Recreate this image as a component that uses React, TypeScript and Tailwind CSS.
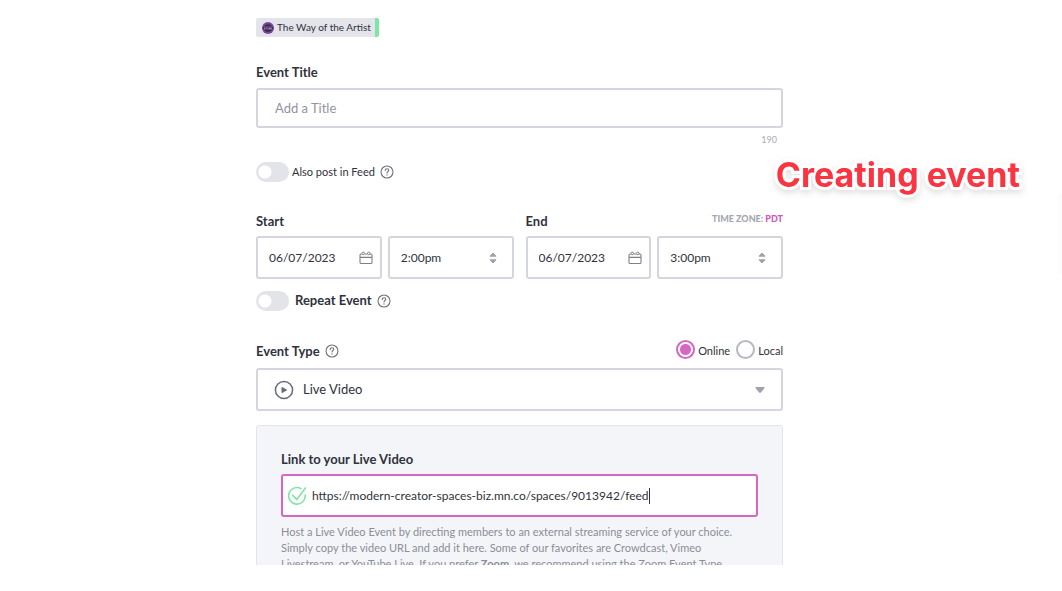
import { useState } from "react";
import type { ReactNode } from "react";

// ─── Icons ────────────────────────────────────────────────

function HelpIcon() {
  return (
    <svg viewBox="0 0 14 14" className="w-3.5 h-3.5" fill="none" stroke="#6f727d" aria-hidden="true">
      <circle cx="7" cy="7" r="6" strokeWidth="1.1" />
      <path d="M5.2 5.5c0-1.1.8-1.8 1.8-1.8s1.8.7 1.8 1.6c0 1.2-1.8 1.3-1.8 2.7" strokeWidth="1.1" strokeLinecap="round" />
      <circle cx="7" cy="10" r=".65" fill="#6f727d" stroke="none" />
    </svg>
  );
}

function CalendarIcon() {
  return (
    <svg viewBox="0 0 14 14" className="w-3.5 h-3.5" fill="none" stroke="#7d808a" aria-hidden="true">
      <path d="M2.8 3H2.2A1.2 1.2 0 0 0 1 4.2v7.1a1.2 1.2 0 0 0 1.2 1.2h9.6a1.2 1.2 0 0 0 1.2-1.2V4.2A1.2 1.2 0 0 0 11.8 3H11M5.6 3h2.8M1 6.4h12" strokeWidth="1.1" />
      <circle cx="4.2" cy="2.4" r="1.3" />
      <circle cx="9.8" cy="2.4" r="1.3" />
    </svg>
  );
}

function SortIcon() {
  return (
    <svg viewBox="0 0 8 12" className="w-2 h-3" fill="#a0a3ad" stroke="#a0a3ad" strokeLinejoin="round" aria-hidden="true">
      <path d="M4 1 7 4.2H1ZM4 11 1 7.8h6Z" />
    </svg>
  );
}

function PlayIcon() {
  return (
    <svg viewBox="0 0 20 20" className="w-5 h-5" fill="none" aria-hidden="true">
      <circle cx="10" cy="10" r="8.6" stroke="#6a6d77" strokeWidth="1.5" />
      <path d="M8 7.4v5.2l4.6-2.6Z" fill="#6a6d77" stroke="#6a6d77" strokeLinejoin="round" />
    </svg>
  );
}

function CheckIcon() {
  return (
    <svg viewBox="0 0 20 20" className="w-5 h-5" fill="none" stroke="#7fe5a6" strokeWidth="1.6" strokeLinecap="round" strokeLinejoin="round" aria-hidden="true">
      <path d="M14 2.6A8.3 8.3 0 1 0 18.2 9" />
      <path d="M5.6 9.2 9.8 13.6 18.4 2" />
    </svg>
  );
}

// ─── Form pieces ──────────────────────────────────────────

const BOX = "w-full border-2 border-[#d4d5de] rounded-[3px] bg-white outline-none text-[#30323d]";

function Toggle({ id, children, bold }: { id: string; children: ReactNode; bold?: boolean }) {
  return (
    <div className="flex items-center h-5">
      <input id={id} type="checkbox" role="switch" className="appearance-none w-[33px] h-5 rounded-full bg-[#e3e3ea] bg-[radial-gradient(circle_at_9px_10px,#fff_6px,transparent_7px)] checked:bg-[#d666c0]" />
      <label htmlFor={id} className={bold ? "ml-1.5 text-[13px] font-bold" : "ml-[3px] text-[11px]"}>{children}</label>
      <button type="button" aria-label="Help" className="ml-[5px]"><HelpIcon /></button>
    </div>
  );
}

function DateTime({ label, time, note }: { label: string; time: string; note?: ReactNode }) {
  const id = label.toLowerCase();
  return (
    <div className="flex-1 min-w-0">
      <div className="flex justify-between h-6">
        <label htmlFor={id} className="text-[13px] leading-[18px] font-bold">{label}</label>
        {note}
      </div>
      <div className="grid grid-cols-2 gap-1.5">
        <div className="relative">
          <input id={id} defaultValue="06/07/2023" className={`${BOX} h-[43px] pl-[11px] text-xs`} />
          <button type="button" aria-label={`Pick ${id} date`} className="absolute right-[9px] inset-y-0"><CalendarIcon /></button>
        </div>
        <div className="relative">
          <select aria-label={`${label} time`} defaultValue={time} className={`${BOX} appearance-none h-[43px] pl-[11px] text-xs`}>
            <option>2:00pm</option>
            <option>3:00pm</option>
          </select>
          <span className="absolute right-[17px] inset-y-0 flex items-center pointer-events-none"><SortIcon /></span>
        </div>
      </div>
    </div>
  );
}

function Radio({ label, checked, onChange }: { label: string; checked: boolean; onChange: () => void }) {
  return (
    <label className="flex items-center gap-[3px] text-[11px]">
      <input type="radio" name="place" checked={checked} onChange={onChange} className="appearance-none w-[19px] h-[19px] rounded-full border-2 border-[#b7b9c2] checked:border-[#d666c0] checked:bg-[radial-gradient(circle,#d666c0_5px,transparent_6px)]" />
      <span className="pt-1">{label}</span>
    </label>
  );
}

export default function App() {
  const [place, setPlace] = useState("Online");
  const [url, setUrl] = useState("https://modern-creator-spaces-biz.mn.co/spaces/9013942/feed");

  return (
    <div className="relative h-screen pb-[26px] overflow-hidden bg-white text-[#30323d] font-['Lato',sans-serif]">
      <form className="h-full overflow-hidden pl-64 pr-[279px] pt-[18px]">
        <div className="flex">
          <div className="flex items-center gap-[3px] h-[19px] pl-1.5 pr-1 bg-[#e4e5eb] rounded-[2px] border-r-4 border-[#7fe5a6] text-[10px]">
            <svg viewBox="0 0 12 12" className="w-3 h-3" aria-hidden="true">
              <circle cx="6" cy="6" r="6" fill="#75479a" />
              <path d="M2 4.2C3.5 1.8 8.5 1.8 10 4.2ZM2 8c1.5 2.4 6.5 2.4 8 0Z" fill="#352944" />
              <path d="M1.2 5.2h9.6v1.9H1.2Z" fill="#292134" />
              <path d="M2 6.2h1.5M4.2 6h1.4M6.4 6.2h3.4" stroke="#ddd4e5" strokeWidth=".9" />
            </svg>
            The Way of the Artist
          </div>
        </div>

        <label htmlFor="title" className="block mt-[26px] mb-[7px] text-[13px] leading-[18px] font-bold">Event Title</label>
        <input id="title" placeholder="Add a Title" className={`${BOX} block h-10 pl-[17px] text-[13px] placeholder:text-[#92949e]`} />
        <div className="pr-1.5 pt-1 text-right text-[9px] leading-[15px] text-[#a9abb5]">190</div>

        <div className="mt-[15px]"><Toggle id="feed">Also post in Feed</Toggle></div>

        <div className="flex gap-3 mt-[30px]">
          <DateTime label="Start" time="2:00pm" />
          <DateTime label="End" time="3:00pm" note={
            <span className="text-[9px] leading-[14px] font-black text-[#a5a7b0]">
              TIME ZONE: <button type="button" className="text-[#d455bd]">PDT</button>
            </span>
          } />
        </div>

        <div className="mt-3"><Toggle id="repeat" bold>Repeat Event</Toggle></div>

        <div className="flex items-center justify-between h-[22px] mt-[27px]">
          <div className="flex items-center gap-[5px] pt-1">
            <label htmlFor="type" className="text-[13px] leading-[18px] font-bold">Event Type</label>
            <button type="button" aria-label="Help"><HelpIcon /></button>
          </div>
          <div className="flex gap-1.5">
            <Radio label="Online" checked={place === "Online"} onChange={() => setPlace("Online")} />
            <Radio label="Local" checked={place === "Local"} onChange={() => setPlace("Local")} />
          </div>
        </div>
        <div className="relative mt-2">
          <span className="absolute left-[18px] inset-y-0 flex items-center pointer-events-none"><PlayIcon /></span>
          <select id="type" className={`${BOX} block appearance-none h-[43px] pl-[45px] text-[13px]`}>
            <option>Live Video</option>
          </select>
          <span className="absolute right-[18px] inset-y-0 flex items-center pointer-events-none">
            <svg viewBox="0 0 10 6" className="w-2.5 h-1.5" fill="#a0a3ad" aria-hidden="true"><path d="M1 0h8q1 0 .5 1L6 5.4q-1 .8-2 0L.5 1Q0 0 1 0Z" /></svg>
          </span>
        </div>

        <section className="mt-3.5 px-6 pt-6 pb-6 bg-[#f4f5f9] border border-[#e4e5ec] rounded-[3px]">
          <label htmlFor="url" className="block mb-1.5 text-[13px] leading-[18px] font-bold">Link to your Live Video</label>
          <div className="flex items-center h-[43px] pl-1 bg-white border-2 border-[#d666c0] rounded-[3px]">
            <CheckIcon />
            <input id="url" value={url} onChange={e => setUrl(e.target.value)} className="[field-sizing:content] ml-[5px] max-w-[95%] text-xs outline-none" />
            <span className="w-px h-4 bg-[#30323d]" />
          </div>
          <p className="mt-[7px] text-[11px] leading-4 text-[#8b8d97]">
            Host a Live Video Event by directing members to an external streaming service of your choice.<br />
            Simply copy the video URL and add it here. Some of our favorites are Crowdcast, Vimeo<br />
            Livestream, or YouTube Live. If you prefer <strong>Zoom</strong>, we recommend using the Zoom Event Type.
          </p>
        </section>
      </form>

      {/* Callout laid over the form */}
      <h1 className="absolute right-[42px] top-[153px] font-['Inter',sans-serif] text-[34px] leading-[44px] font-bold text-[#fb3442] [-webkit-text-stroke:6px_white] [paint-order:stroke_fill] [filter:drop-shadow(0_3px_3px_#0000001f)]">Creating event</h1>
      <div className="absolute right-0 top-[194px] w-1 h-20 rounded-l bg-[#fcfcfd]" />
    </div>
  );
}
